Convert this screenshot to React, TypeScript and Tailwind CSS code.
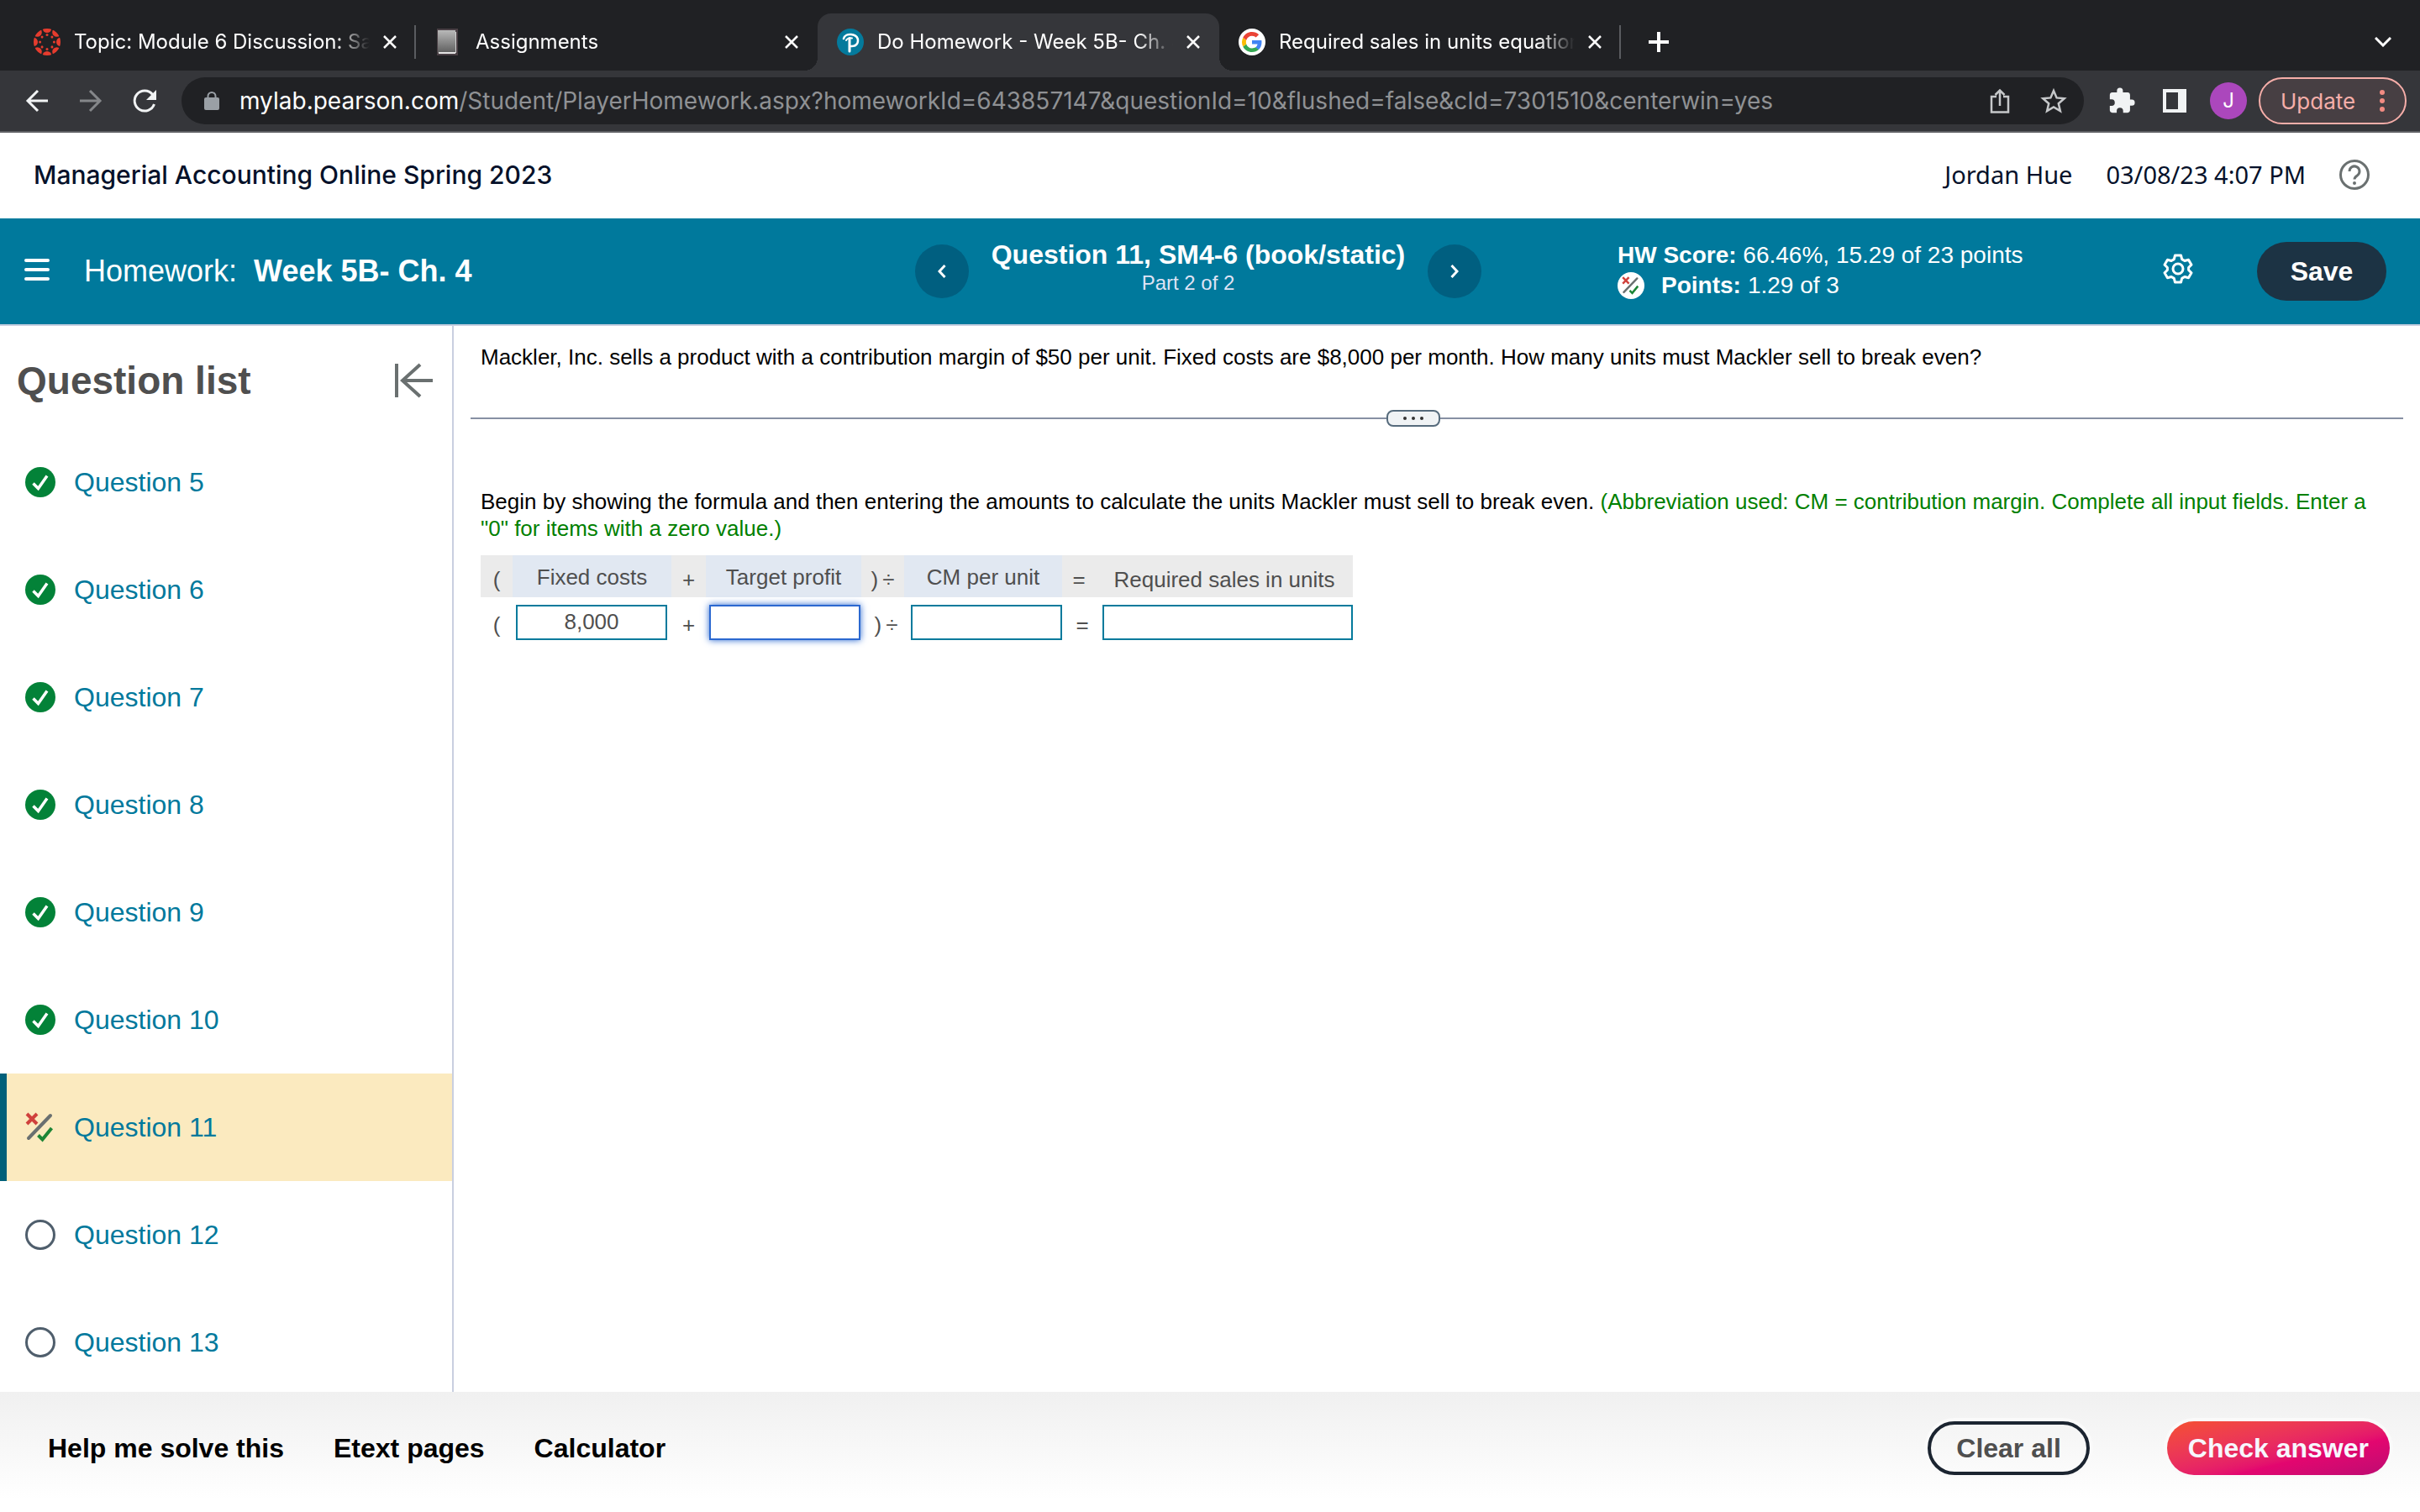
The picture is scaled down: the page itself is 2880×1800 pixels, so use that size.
import React from 'react';

type Status = 'correct' | 'partial' | 'open';

const questions: { id: number; status: Status }[] = [
  { id: 5, status: 'correct' },
  { id: 6, status: 'correct' },
  { id: 7, status: 'correct' },
  { id: 8, status: 'correct' },
  { id: 9, status: 'correct' },
  { id: 10, status: 'correct' },
  { id: 11, status: 'partial' },
  { id: 12, status: 'open' },
  { id: 13, status: 'open' },
];

const CanvasLogo = () => (
  <svg viewBox="0 0 32 32" className="size-8 shrink-0">
    <clipPath id="canvas-clip">
      <circle cx="16" cy="16" r="16" />
    </clipPath>
    <g fill="#e63c2e" clipPath="url(#canvas-clip)">
      {[0, 45, 90, 135, 180, 225, 270, 315].map(a => (
        <g key={a} transform={`rotate(${a} 16 16)`}>
          <circle cx="16" cy="-0.4" r="5.4" />
          <circle cx="16" cy="7.6" r="1.5" />
        </g>
      ))}
    </g>
  </svg>
);

const BookIcon = () => (
  <svg viewBox="0 0 32 32" className="size-8 shrink-0">
    <defs>
      <linearGradient id="book" x1="0" y1="0" x2="0" y2="1">
        <stop offset="0" stopColor="#b9b9b9" />
        <stop offset="1" stopColor="#5e5e5e" />
      </linearGradient>
    </defs>
    <rect x="2" y="0" width="25" height="32" fill="#4a4045" />
    <rect x="3" y="2" width="21" height="27" fill="url(#book)" />
    <rect x="4" y="28" width="20" height="2" fill="#e4e4e4" />
    <rect x="24" y="4" width="1" height="25" fill="#d0d0d0" />
  </svg>
);

const PearsonLogo = () => (
  <svg viewBox="0 0 32 32" className="size-8 shrink-0" fill="none" stroke="#fff" strokeLinecap="round">
    <circle cx="16" cy="16" r="16" fill="#047a9c" stroke="none" />
    <path d="M8 12c1-4 5-5.500 9-5 5 .6 8 3.500 8 7.500 0 4.500-4 7-8.500 6.500" strokeWidth="2.500" />
    <path d="M15 11.500V27" strokeWidth="3" />
    <path d="M11 14c1-2 4-3.500 7-2.500" strokeWidth="2" />
  </svg>
);

const GoogleLogo = () => (
  <svg viewBox="0 0 32 32" className="size-8 shrink-0">
    <circle cx="16" cy="16" r="16" fill="#fff" />
    <g transform="translate(4 4)">
      <path fill="#4285f4" d="M23.500 12.300c0-.9-.1-1.500-.2-2.300H12v4.500h6.500c-.1 1.100-.8 2.800-2.400 3.900l3.700 2.900c2.300-2.100 3.700-5.200 3.700-9z" />
      <path fill="#34a853" d="M12 24c3.200 0 6-1.100 7.900-2.900l-3.700-2.900c-1 .7-2.400 1.200-4.200 1.200-3.200 0-5.900-2.100-6.800-5l-3.900 3C3.200 21.300 7.300 24 12 24z" />
      <path fill="#fbbc05" d="M5.200 14.400a7.400 7.400 0 0 1 0-4.700L1.300 6.700a12 12 0 0 0 0 10.700z" />
      <path fill="#ea4335" d="M12 4.700c2.300 0 3.800 1 4.700 1.800l3.400-3.300C18 1.200 15.200 0 12 0 7.300 0 3.200 2.700 1.300 6.700l3.900 3c1-2.900 3.600-5 6.800-5z" />
    </g>
  </svg>
);

const CorrectIcon = () => (
  <svg viewBox="0 0 36 36" className="size-9 shrink-0" fill="none">
    <circle cx="18" cy="18" r="18" fill="#038238" />
    <path d="M9.500 19.500l6 6L26 10.500" stroke="#fff" strokeWidth="3.500" />
  </svg>
);

const PartialIcon = ({ className }: { className: string }) => (
  <svg viewBox="0 0 36 36" className={className} fill="none">
    <path d="M2 2l12 12M14 2L2 14" stroke="#d0413c" strokeWidth="4" />
    <path d="M30 4L4 31" stroke="#6a7070" strokeWidth="4" strokeLinecap="round" />
    <path d="M15.500 27.500l5 5L31.500 19" stroke="#1d8536" strokeWidth="4" />
  </svg>
);

const OpenIcon = () => (
  <svg viewBox="0 0 36 36" className="size-9 shrink-0" fill="none">
    <circle cx="18" cy="18" r="16.500" stroke="#4f5e6c" strokeWidth="3" />
  </svg>
);

const Tab = ({ icon, title, active = false, divider = false }: {
  icon: React.ReactNode;
  title: string;
  active?: boolean;
  divider?: boolean;
}) => (
  <div
    className={`relative flex w-[478px] items-center gap-4 px-[23px] ${active ? 'rounded-t-2xl bg-[#35363a]' : ''}`}
  >
    {active && (
      <>
        <span className="absolute bottom-0 -left-4 size-4 bg-[radial-gradient(circle_at_0_0,#202124_16px,#35363a_16px)]" />
        <span className="absolute -right-4 bottom-0 size-4 bg-[radial-gradient(circle_at_100%_0,#202124_16px,#35363a_16px)]" />
      </>
    )}
    {icon}
    <span className="flex-1 overflow-hidden text-2xl whitespace-nowrap text-white [mask-image:linear-gradient(to_right,#000_88%,transparent)]">
      {title}
    </span>
    <button aria-label="Close tab">
      <svg viewBox="0 0 16 16" className="size-4" stroke="#fff" strokeWidth="2.500">
        <path d="M1 1l14 14M15 1L1 15" />
      </svg>
    </button>
    {divider && <span className="absolute right-0 h-10 w-0.5 bg-[#5a5c60]" />}
  </div>
);

const BrowserBar = () => (
  <div className="shrink-0 font-['Inter',sans-serif]">
    <div className="flex h-21 bg-[#202124] pt-4 pl-[17px]">
      <Tab icon={<CanvasLogo />} title="Topic: Module 6 Discussion: Sales Mix" divider />
      <Tab icon={<BookIcon />} title="Assignments" />
      <Tab icon={<PearsonLogo />} title="Do Homework - Week 5B- Ch. 4" active />
      <Tab icon={<GoogleLogo />} title="Required sales in units equation" divider />
      <button aria-label="New tab" className="ml-8">
        <svg viewBox="0 0 26 26" className="size-[26px]" stroke="#fff" strokeWidth="4">
          <path d="M13 1v24M1 13h24" />
        </svg>
      </button>
      <button aria-label="Search tabs" className="mr-[34px] ml-auto">
        <svg viewBox="0 0 20 12" className="w-5" fill="none" stroke="#fff" strokeWidth="3">
          <path d="M1 1l9 9 9-9" />
        </svg>
      </button>
    </div>

    <div className="flex h-[74px] items-center border-b-2 border-[#5f6064] bg-[#35363a] pr-4 pl-7">
      <button aria-label="Back">
        <svg viewBox="0 0 32 32" className="size-8" fill="none" stroke="#f1f3f4" strokeWidth="3">
          <path d="M29 16H5M17 4L5 16l12 12" />
        </svg>
      </button>
      <button aria-label="Forward" className="ml-8">
        <svg viewBox="0 0 32 32" className="size-8" fill="none" stroke="#85878a" strokeWidth="3">
          <path d="M3 16h24M15 4l12 12-12 12" />
        </svg>
      </button>
      <button aria-label="Reload" className="ml-8">
        <svg viewBox="0 0 32 32" className="size-8" fill="none" stroke="#f1f3f4" strokeWidth="3">
          <path d="M25.500 8.500A12 12 0 1 0 27.500 20" />
          <path d="M30 3v12H18z" fill="#f1f3f4" stroke="none" />
        </svg>
      </button>

      <div className="ml-7 flex h-14 flex-1 items-center gap-6 rounded-full bg-[#202124] pr-5 pl-[27px]">
        <svg viewBox="0 0 18 22" className="w-[18px] shrink-0" fill="none">
          <rect x="0" y="7" width="18" height="15" rx="2" fill="#9aa0a6" />
          <path d="M4.500 8V5.500a4.500 4.500 0 0 1 9 0V8" stroke="#9aa0a6" strokeWidth="2" />
        </svg>
        <span className="flex-1 text-[28px] whitespace-nowrap text-[#8f9194]">
          <span className="text-white">mylab.pearson.com</span>
          /Student/PlayerHomework.aspx?homeworkId=643857147&amp;questionId=10&amp;flushed=false&amp;cId=7301510&amp;centerwin=yes
        </span>
        <button aria-label="Share">
          <svg viewBox="0 0 24 30" className="w-6" fill="none" stroke="#c6c8ca" strokeWidth="2.500">
            <path d="M8 10H2v18.500h20V10h-6M12 21V3M6.500 8L12 2.500 17.500 8" />
          </svg>
        </button>
        <button aria-label="Bookmark" className="ml-3">
          <svg viewBox="0 0 32 32" className="size-8" fill="none" stroke="#c6c8ca" strokeWidth="2.500">
            <path d="M16 4l3.600 8.400 9.100.8-6.900 6 2.100 8.900-7.900-4.700-7.900 4.700 2.100-8.900-6.900-6 9.100-.8z" />
          </svg>
        </button>
      </div>

      <button aria-label="Extensions" className="ml-7">
        <svg viewBox="0 0 24 24" className="size-[34px]" fill="#f1f3f4">
          <path d="M20.500 11H19V7c0-1.100-.9-2-2-2h-4V3.500a2.500 2.500 0 0 0-5 0V5H4c-1.100 0-2 .9-2 2v3.800h1.500a2.700 2.700 0 0 1 0 5.400H2V20c0 1.100.9 2 2 2h3.800v-1.500a2.700 2.700 0 0 1 5.400 0V22H17c1.100 0 2-.9 2-2v-4h1.500a2.500 2.500 0 0 0 0-5z" />
        </svg>
      </button>
      <button aria-label="Side panel" className="ml-8">
        <svg viewBox="0 0 28 28" className="size-7" fill="none">
          <path d="M0 0h28v28H0zM4 4v20h14V4z" fill="#f1f3f4" fillRule="evenodd" />
        </svg>
      </button>
      <button className="ml-7 flex size-11 items-center justify-center rounded-full bg-[#ab47bc] text-2xl text-white">
        J
      </button>
      <button className="ml-3.5 flex h-14 w-44 items-center justify-between rounded-full border-2 border-[#f6aea9] bg-[#473f43] pr-6 pl-6 text-[26px] text-[#f6aea9]">
        Update
        <svg viewBox="0 0 6 28" className="w-1.5" fill="#f28b82">
          <circle cx="3" cy="4" r="3" />
          <circle cx="3" cy="14" r="3" />
          <circle cx="3" cy="24" r="3" />
        </svg>
      </button>
    </div>
  </div>
);

const CourseHeader = () => (
  <header className="flex h-[102px] shrink-0 items-center bg-white pr-[60px] pb-0.5 pl-10 text-[#05112a]">
    <h1 className="font-['Inter',sans-serif] text-[30px] font-medium">Managerial Accounting Online Spring 2023</h1>
    <div className="ml-auto flex items-center gap-10 font-['Noto_Sans',sans-serif] text-[29px]">
      <span>Jordan Hue</span>
      <span>03/08/23 4:07 PM</span>
      <button aria-label="Help">
        <svg viewBox="0 0 36 36" className="size-9" fill="none" stroke="#6a7070" strokeWidth="3">
          <circle cx="18" cy="18" r="16.500" />
          <path d="M12 14a6 6 0 1 1 9.500 4.800c-2.300 1.500-3.500 2.200-3.500 4.700" />
          <circle cx="18" cy="28" r="1" fill="#6a7070" strokeWidth="2" />
        </svg>
      </button>
    </div>
  </header>
);

const HomeworkBar = () => (
  <div className="grid h-32 shrink-0 grid-cols-[1089px_674px_1fr] border-b-2 border-[#c7cfe0] bg-[#00799c] text-white">
    <div className="flex items-center gap-10 pb-1 pl-7">
      <button aria-label="Menu">
        <svg viewBox="0 0 32 28" className="w-8" stroke="#fff" strokeWidth="4" strokeLinecap="round">
          <path d="M3 3h26M3 14h26M3 25h26" />
        </svg>
      </button>
      <p className="flex gap-5 pt-1 text-4xl">
        Homework: <b>Week 5B- Ch. 4</b>
      </p>
    </div>

    <div className="flex items-center justify-between">
      <button aria-label="Previous question" className="flex size-16 items-center justify-center rounded-full bg-[#005f80]">
        <svg viewBox="0 0 10 16" className="w-2.5" fill="none" stroke="#fff" strokeWidth="3">
          <path d="M8.500 1L2 8l6.500 7" />
        </svg>
      </button>
      <div className="pb-2 text-center">
        <h2 className="text-[32px] leading-9 font-bold">Question 11, SM4-6 (book/static)</h2>
        <p className="pr-6 text-2xl text-[#dfe3f5]">Part 2 of 2</p>
      </div>
      <button aria-label="Next question" className="flex size-16 items-center justify-center rounded-full bg-[#005f80]">
        <svg viewBox="0 0 10 16" className="w-2.5" fill="none" stroke="#fff" strokeWidth="3">
          <path d="M1.500 1L8 8l-6.500 7" />
        </svg>
      </button>
    </div>

    <div className="flex items-center pr-10 pl-[162px]">
      <div className="pb-0.5 text-[28px] leading-9">
        <p>
          <b>HW Score:</b> 66.46%, 15.29 of 23 points
        </p>
        <p className="flex items-center">
          <span className="mr-5 flex size-8 items-center justify-center rounded-full bg-white">
            <PartialIcon className="size-[22px]" />
          </span>
          <b className="mr-2">Points:</b> 1.29 of 3
        </p>
      </div>
      <button aria-label="Settings" className="mr-[76px] mb-1.5 ml-auto">
        <svg viewBox="0 0 36 36" className="size-9" fill="none" stroke="#fff" strokeWidth="3" strokeLinejoin="round">
          <path d="M14.500 2h7l1.200 4.600 3.200 1.900 4.600-1.300 3.500 6-3.400 3.300v3l3.400 3.300-3.500 6-4.600-1.300-3.200 1.900L21.500 34h-7l-1.200-4.600-3.200-1.900-4.600 1.300-3.500-6 3.400-3.300v-3L2 13.200l3.500-6 4.600 1.300 3.200-1.900z" />
          <circle cx="18" cy="18" r="6" />
        </svg>
      </button>
      <button className="h-[70px] w-[154px] rounded-full bg-[#1c3344] text-[32px] font-bold">Save</button>
    </div>
  </div>
);

const Sidebar = () => (
  <aside className="w-[540px] shrink-0 overflow-hidden border-r-2 border-[#c9cfe0]">
    <div className="flex h-[122px] items-center justify-between pt-2 pr-[22px] pl-5">
      <h2 className="text-[46px] font-bold text-[#4f4f4f]">Question list</h2>
      <button aria-label="Collapse question list">
        <svg viewBox="0 0 46 42" className="w-[46px]" fill="none" stroke="#6a7070" strokeWidth="4">
          <path d="M2 1v40M45 21H9M30 2L9 21l21 19" />
        </svg>
      </button>
    </div>
    <ul>
      {questions.map(q => (
        <li
          key={q.id}
          className={`flex h-32 items-center gap-[22px] border-l-8 pl-[22px] ${
            q.status === 'partial' ? 'border-[#00607a] bg-[#fbeabf]' : 'border-transparent'
          }`}
        >
          {q.status === 'correct' && <CorrectIcon />}
          {q.status === 'partial' && <PartialIcon className="size-9 shrink-0" />}
          {q.status === 'open' && <OpenIcon />}
          <a href="#" className="text-[32px] text-[#00799c]">
            Question {q.id}
          </a>
        </li>
      ))}
    </ul>
  </aside>
);

const inputBase = 'block h-[42px] border-2 bg-white text-center outline-none';

const FormulaTable = () => (
  <table className="mt-2 w-[1038px] table-fixed border-collapse text-center text-[#4f4f4f]">
    <colgroup>
      <col className="w-[38px]" />
      <col className="w-[189px]" />
      <col className="w-[41px]" />
      <col className="w-[185px]" />
      <col className="w-[51px]" />
      <col className="w-[188px]" />
      <col className="w-[48px]" />
      <col className="w-[298px]" />
    </colgroup>
    <thead>
      <tr className="h-[50px] bg-[#ebebeb]">
        <td className="pt-2">(</td>
        <th id="fixed" className="bg-[#e1e8f2] pt-0.5 font-normal">Fixed costs</th>
        <td className="pt-2">+</td>
        <th id="target" className="bg-[#e1e8f2] pt-0.5 font-normal">Target profit</th>
        <td className="pt-2">)&thinsp;÷</td>
        <th id="cm" className="bg-[#e1e8f2] pt-0.5 font-normal">CM per unit</th>
        <td className="pt-2 pr-2">=</td>
        <th id="required" className="pt-2 pr-2 font-normal">Required sales in units</th>
      </tr>
    </thead>
    <tbody>
      <tr className="h-[59px]">
        <td className="pt-1.5">(</td>
        <td>
          <input aria-labelledby="fixed" defaultValue="8,000" className={`${inputBase} ml-1 w-[180px] border-[#047a9c]`} />
        </td>
        <td className="pt-1.5">+</td>
        <td>
          <input
            aria-labelledby="target"
            className={`${inputBase} ml-1 w-[180px] border-[#2b68d0] shadow-[0_0_8px_#2b68d0]`}
          />
        </td>
        <td className="pt-1.5 pl-2">)&thinsp;÷</td>
        <td>
          <input aria-labelledby="cm" className={`${inputBase} ml-2 w-[180px] border-[#047a9c]`} />
        </td>
        <td className="pt-1.5">=</td>
        <td>
          <input aria-labelledby="required" className={`${inputBase} w-full border-[#047a9c]`} />
        </td>
      </tr>
    </tbody>
  </table>
);

const Exercise = () => (
  <main className="flex-1 px-5 text-[26px] leading-8 text-black">
    <p className="pt-[21px] pl-3">
      Mackler, Inc. sells a product with a contribution margin of $50 per unit. Fixed costs are $8,000 per month. How
      many units must Mackler sell to break even?
    </p>
    <div className="mt-[47px] flex h-5 items-center">
      <span className="h-0.5 w-[1090px] bg-[#8790a3]" />
      <button
        aria-label="Resize panel"
        className="flex h-5 w-16 items-center justify-center gap-1.5 rounded-lg border-2 border-[#566b7c] bg-[#f0f3f5]"
      >
        <span className="size-1 rounded-full bg-[#333]" />
        <span className="size-1 rounded-full bg-[#333]" />
        <span className="size-1 rounded-full bg-[#333]" />
      </button>
      <span className="h-0.5 flex-1 bg-[#8790a3]" />
    </div>
    <div className="px-3 pt-[73px]">
      <p className="pb-2">
        Begin by showing the formula and then entering the amounts to calculate the units Mackler must sell to break
        even.{' '}
        <span className="text-[#008000]">
          (Abbreviation used: CM = contribution margin. Complete all input fields. Enter a "0" for items with a zero
          value.)
        </span>
      </p>
      <FormulaTable />
    </div>
  </main>
);

const Footer = () => (
  <footer className="flex h-[143px] shrink-0 items-center bg-linear-to-b from-[#f0f0f0] to-white to-90% pr-9 pb-2.5 pl-[57px] text-[32px] font-bold">
    <nav className="flex gap-[59px] text-black">
      <a href="#">Help me solve this</a>
      <a href="#">Etext pages</a>
      <a href="#">Calculator</a>
    </nav>
    <button className="ml-auto h-16 rounded-full border-4 border-[#1b2430] px-[30px] text-[#4f4f4f] ring-4 ring-[#fafafa]">
      Clear all
    </button>
    <button className="ml-[92px] h-16 rounded-full bg-linear-to-br from-[#f5502d] via-[#e3066f] via-65% to-[#bd0a72] px-[25px] text-[#f7f7ff] ring-4 ring-[#fafafa]">
      Check answer
    </button>
  </footer>
);

export default function App() {
  return (
    <div className="flex h-screen flex-col overflow-hidden bg-white font-['Liberation_Sans',Arial,sans-serif]">
      <BrowserBar />
      <CourseHeader />
      <HomeworkBar />
      <div className="flex min-h-0 flex-1">
        <Sidebar />
        <Exercise />
      </div>
      <Footer />
    </div>
  );
}
